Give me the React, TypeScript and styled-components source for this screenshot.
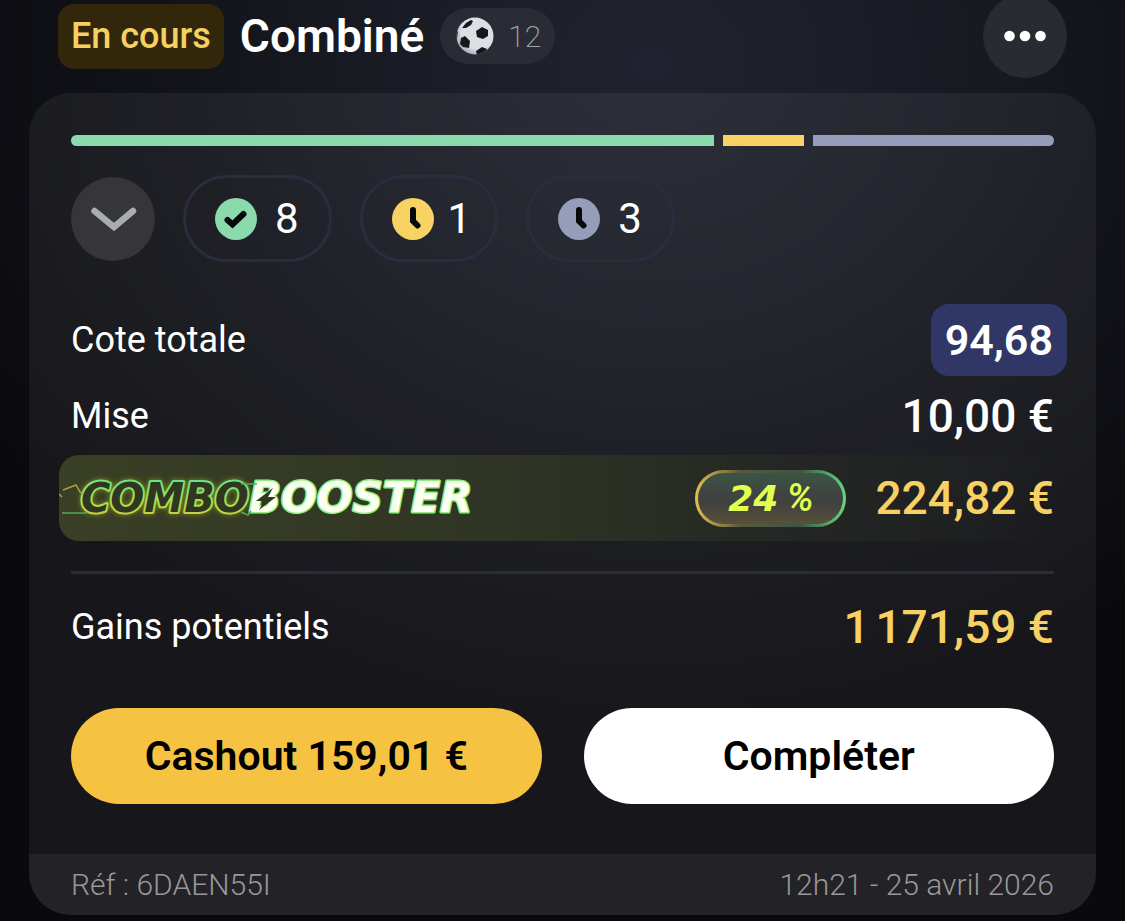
import React from "react";
import styled, { createGlobalStyle } from "styled-components";

const GlobalStyle = createGlobalStyle`
  *, *::before, *::after { box-sizing: border-box; }
  html { background: #0a0a0e; }
  body {
    margin: 0;
    color: #fff;
    font-family: Roboto, "Liberation Sans", sans-serif;
  }
  button { font: inherit; border: 0; padding: 0; cursor: pointer; }
`;

const Page = styled.main`
  overflow: hidden;
  padding: 0 29px 6px;
  background: radial-gradient(ellipse 70% 72% at 58% 7%, #20232f 0%, #1a1c25 32%, #111218 66%, #0a0a0e 100%);
`;

const Header = styled.header`
  display: flex;
  align-items: center;
  height: 84px;
  margin: -6px 29px 15px;
`;

const Status = styled.span`
  display: flex;
  align-items: center;
  height: 65px;
  padding: 0 13px;
  border-radius: 16px;
  background: #32270a;
  color: #f6d162;
  font-size: 36px;
  font-weight: 500;
`;

const Title = styled.h1`
  margin: 0 16px;
  font-size: 46px;
  font-weight: 600;
  line-height: 56px;
`;

const SportBadge = styled.span`
  display: flex;
  align-items: center;
  gap: 14px;
  height: 56px;
  padding: 0 14px 0 16px;
  border-radius: 28px;
  background: #2a2c35;
  color: #a3a5ab;
  font-size: 30px;
  font-weight: 200;
`;

const MoreButton = styled.button`
  display: grid;
  place-items: center;
  width: 84px;
  height: 84px;
  margin-left: auto;
  border-radius: 50%;
  background: #292b33;
`;

const Card = styled.section`
  overflow: hidden;
  border-radius: 42px;
  background: rgba(255, 255, 255, 0.055);
`;

const CardBody = styled.div`
  padding: 42px 42px 50px;
`;

const Progress = styled.div`
  display: flex;
  gap: 9px;
  height: 11px;
  border-radius: 6px;
  overflow: hidden;
`;

const Segment = styled.span<{ $share: number; $color: string }>`
  flex: ${(p) => p.$share} 1 0;
  background: ${(p) => p.$color};
`;

const Counts = styled.div`
  display: flex;
  align-items: center;
  gap: 28px;
  margin: 29px 0 42px;
`;

const ToggleButton = styled.button`
  width: 84px;
  height: 84px;
  border-radius: 50%;
  background: #35353a;
`;

const CountPill = styled.span<{ $narrow?: boolean }>`
  display: flex;
  align-items: center;
  gap: ${(p) => (p.$narrow ? 14 : 18)}px;
  height: 87px;
  padding: 0 ${(p) => (p.$narrow ? 24 : 30)}px 0 29px;
  border: 3px solid #2b2d3f;
  border-radius: 44px;
  font-size: 42px;
`;

const Details = styled.dl`
  margin: 0;
`;

const Row = styled.div<{ $height: number }>`
  display: flex;
  align-items: center;
  justify-content: space-between;
  height: ${(p) => p.$height}px;
`;

const Label = styled.dt`
  font-size: 36px;
`;

const Amount = styled.dd<{ $gold?: boolean }>`
  margin: 0;
  color: ${(p) => (p.$gold ? "#f8d165" : "#fff")};
  font-size: 46px;
  font-weight: 500;
`;

const OddsBadge = styled.dd`
  display: flex;
  align-items: center;
  height: 72px;
  margin: 0 -13px 0 0;
  padding: 0 14px;
  border-radius: 18px;
  background: #303766;
  font-size: 43px;
  font-weight: 600;
`;

const BoosterRow = styled.div`
  display: flex;
  align-items: center;
  height: 86px;
  margin: 0 -13px 30px -12px;
  padding-right: 13px;
  border-radius: 20px;
  background: linear-gradient(90deg, #394024 0%, #2f3425 45%, #242723 72%, rgba(32, 33, 36, 0) 100%);
`;

const BoosterLabel = styled.dt`
  display: flex;
  flex: 1;
`;

const BoostRate = styled.dd`
  display: flex;
  align-items: center;
  justify-content: center;
  gap: 8px;
  width: 151px;
  height: 57px;
  margin: 0 29px 0 0;
  border: 3px solid transparent;
  border-radius: 29px;
  background:
    linear-gradient(180deg, #3a5544 0%, #404442 40%, #41413f 60%, #575039 100%) padding-box,
    linear-gradient(90deg, #e5c04c 0%, #575a3e 30%, #3d5544 70%, #64dc83 100%) border-box;
  color: #e0ff4f;
  font-size: 38px;
  font-style: italic;
  font-weight: 500;
`;

const RateValue = styled.strong`
  font-family: "DejaVu Sans", sans-serif;
  font-size: 36px;
  font-weight: 700;
`;

const Divider = styled.hr`
  height: 3px;
  margin: 0;
  border: 0;
  background: #2a2c39;
`;

const Actions = styled.div`
  display: grid;
  grid-template-columns: 1fr 1fr;
  gap: 42px;
  margin-top: 28px;
`;

const ActionButton = styled.button<{ $primary?: boolean }>`
  height: 96px;
  border-radius: 48px;
  background: ${(p) => (p.$primary ? "#f5c242" : "#fff")};
  color: #000;
  font-size: 41px;
  font-weight: 600;
`;

const CardFooter = styled.footer`
  display: flex;
  align-items: center;
  justify-content: space-between;
  height: 61px;
  padding: 0 42px;
  background: #232227;
  color: #98979a;
  font-size: 30px;
  font-weight: 300;
`;

const Ball = () => (
  <svg width="38" height="38" viewBox="0 0 38 38" aria-hidden="true">
    <defs>
      <clipPath id="ball"><circle cx="19" cy="19" r="18.5" /></clipPath>
      <radialGradient id="ballShade" cx="60%" cy="38%" r="62%">
        <stop offset="75%" stopColor="#dce0e5" />
        <stop offset="100%" stopColor="#aeb5c0" />
      </radialGradient>
    </defs>
    <circle cx="19" cy="19" r="18.5" fill="url(#ballShade)" />
    <g clipPath="url(#ball)" fill="#15171a">
      <path d="M6 11 L10 6 L15 3 L17 4 L15 8 L10 11Z" />
      <path d="M20 14 L26 10 L32 13 L32 19 L27 22 L21 20Z" />
      <path d="M5 21 L9 19 L14 24 L13 31 L7 30 L4 27Z" />
      <path d="M20 34 L26 30 L31 32 L28 38 L21 38Z" />
      <path d="M0 16 L2 14 L1 21 L0 22Z" />
    </g>
  </svg>
);

const CheckIcon = () => (
  <svg width="42" height="42" viewBox="0 0 42 42" aria-hidden="true">
    <circle cx="21" cy="21" r="21" fill="#8adaab" />
    <path d="M12.5 22 L17.5 26.5 L28.5 16" fill="none" stroke="#08090b" strokeWidth="6" strokeLinecap="round" />
  </svg>
);

const ClockIcon = ({ color }: { color: string }) => (
  <svg width="42" height="42" viewBox="0 0 42 42" aria-hidden="true">
    <circle cx="21" cy="21" r="21" fill={color} />
    <path d="M21 12 V23 L25.5 27.5" fill="none" stroke="#08090b" strokeWidth="6" strokeLinecap="round" />
  </svg>
);

const ComboBoosterLogo = () => (
  <svg width="420" height="86" viewBox="0 0 420 86" role="img" aria-label="Combo Booster">
    <defs>
      <linearGradient id="neon" x1="0" y1="1" x2="0.12" y2="0">
        <stop offset="0%" stopColor="#e3bd3c" />
        <stop offset="45%" stopColor="#a8e24c" />
        <stop offset="100%" stopColor="#5fe58d" />
      </linearGradient>
      <filter id="glow" x="-10%" y="-50%" width="120%" height="200%">
        <feGaussianBlur stdDeviation="2.5" />
      </filter>
    </defs>
    <g fontFamily="DejaVu Sans, sans-serif" fontWeight="700" fontStyle="italic" strokeLinejoin="round">
      <text x="22" y="57" fontSize="40" fill="none" stroke="#a0a91c" strokeWidth="5" opacity="0.6" filter="url(#glow)" aria-hidden="true">COMBO</text>
      <text x="22" y="57" fontSize="40" fill="#30361f" stroke="url(#neon)" strokeWidth="4" paintOrder="stroke">COMBO</text>
      <text x="190" y="57" fontSize="42" fill="#fbfff0" stroke="#8cf07c" strokeWidth="3" paintOrder="stroke">BOOSTER</text>
    </g>
    <path d="M0 39 L3 42 M4 35 L17 30 L21 37 L24 39" fill="none" stroke="#a9a43a" strokeWidth="1.5" />
    <path d="M3 58 H28 M182 29 H198 M182 57 L189 60 L192 56" fill="none" stroke="#54a85c" strokeWidth="1.5" />
    <path d="M214 33 L197 46 L205 46 L200 55 L217 42 L209 42Z" fill="#30361f" />
  </svg>
);

export default function App() {
  return (
    <>
      <GlobalStyle />
      <Page>
        <Header>
          <Status>En cours</Status>
          <Title>Combiné</Title>
          <SportBadge><Ball />12</SportBadge>
          <MoreButton aria-label="Plus d'options">
            <svg width="42" height="12" viewBox="0 0 42 12" fill="#fff" aria-hidden="true">
              <circle cx="5.5" cy="6" r="5.3" />
              <circle cx="21" cy="6" r="5.3" />
              <circle cx="36.5" cy="6" r="5.3" />
            </svg>
          </MoreButton>
        </Header>

        <Card>
          <CardBody>
            <Progress>
              <Segment $share={8} $color="#8adaab" />
              <Segment $share={1} $color="#f8d364" />
              <Segment $share={3} $color="#959dba" />
            </Progress>

            <Counts>
              <ToggleButton aria-label="Afficher les sélections">
                <svg width="84" height="84" viewBox="0 0 84 84" aria-hidden="true">
                  <path d="M23.5 34 L43 50 L62 34" fill="none" stroke="#a8adb0" strokeWidth="6.5" strokeLinecap="round" />
                </svg>
              </ToggleButton>
              <CountPill><CheckIcon />8</CountPill>
              <CountPill $narrow><ClockIcon color="#f8d364" />1</CountPill>
              <CountPill><ClockIcon color="#959dba" />3</CountPill>
            </Counts>

            <Details>
              <Row $height={72}>
                <Label>Cote totale</Label>
                <OddsBadge>94,68</OddsBadge>
              </Row>
              <Row $height={79}>
                <Label>Mise</Label>
                <Amount>10,00 €</Amount>
              </Row>
              <BoosterRow>
                <BoosterLabel><ComboBoosterLogo /></BoosterLabel>
                <BoostRate><RateValue>24</RateValue>%</BoostRate>
                <Amount $gold>224,82 €</Amount>
              </BoosterRow>
            </Details>
            <Divider />
            <Details>
              <Row $height={106}>
                <Label>Gains potentiels</Label>
                <Amount $gold>1{"\u202f"}171,59 €</Amount>
              </Row>
            </Details>

            <Actions>
              <ActionButton $primary>Cashout 159,01 €</ActionButton>
              <ActionButton>Compléter</ActionButton>
            </Actions>
          </CardBody>
          <CardFooter>
            <span>Réf : 6DAEN55I</span>
            <time dateTime="2026-04-25T12:21">12h21 - 25 avril 2026</time>
          </CardFooter>
        </Card>
      </Page>
    </>
  );
}
